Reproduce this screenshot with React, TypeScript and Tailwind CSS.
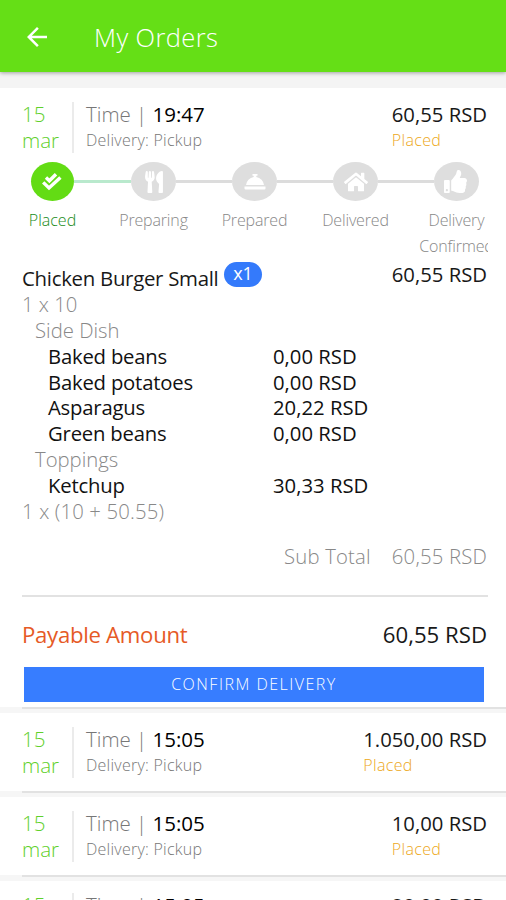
import type { ReactNode } from "react";
import { FaUtensils, FaHome, FaThumbsUp } from "react-icons/fa";
import { MdArrowBack } from "react-icons/md";

function DoubleCheck() {
  return (
    <svg className="mr-[2px]" width="22" height="22" viewBox="0 0 22 22" fill="none" stroke="currentColor" strokeWidth="3.4">
      <path d="M5 6.6 8.4 9.8 15 3.2" />
      <path d="M2.2 11.4 8 17 19.4 6.4" />
    </svg>
  );
}

function Cloche() {
  return (
    <svg width="24" height="20" viewBox="0 0 24 20" fill="currentColor">
      <path d="M9.5 2h5v1.8h-1.2V5A9 9 0 0 1 21 13H3a9 9 0 0 1 7.7-8V3.8H9.5z" />
      <path d="M1.5 14.6h21v2a1 1 0 0 1-1 1h-19a1 1 0 0 1-1-1z" />
    </svg>
  );
}

type Step = { label: ReactNode; icon: ReactNode; active?: boolean };

const steps: Step[] = [
  { label: "Placed", icon: <DoubleCheck />, active: true },
  { label: "Preparing", icon: <FaUtensils size={22} /> },
  { label: "Prepared", icon: <Cloche /> },
  { label: "Delivered", icon: <FaHome size={24} /> },
  { label: <>Delivery<br />Confirmed</>, icon: <FaThumbsUp size={23} className="mr-[3px]" /> },
];

const lines = [
  { name: "Side Dish", group: true },
  { name: "Baked beans", price: "0,00 RSD" },
  { name: "Baked potatoes", price: "0,00 RSD" },
  { name: "Asparagus", price: "20,22 RSD" },
  { name: "Green beans", price: "0,00 RSD" },
  { name: "Toppings", group: true },
  { name: "Ketchup", price: "30,33 RSD" },
];

function OrderHead({ time, price }: { time: string; price: string }) {
  return (
    <div className="flex h-[52px] pl-[22px] pr-[19px] leading-[26px]">
      <div className="w-[50px] text-[20.6px] font-light text-[#5fd02b]">
        15
        <br />
        mar
      </div>
      <div className="mt-px h-[51px] w-[2px] bg-[#ebebeb]" />
      <div className="ml-3 flex-1">
        <div className="text-[20.5px] font-light text-[#777]">
          Time | <span className="font-normal text-black">{time}</span>
        </div>
        <div className="text-[16px] font-light tracking-[0.25px] text-[#777]">Delivery: Pickup</div>
      </div>
      <div>
        <div className="text-[20.3px] text-[#181818]">{price}</div>
        <div className="text-[16px] font-light tracking-[0.35px] text-[#eda821]">Placed</div>
      </div>
    </div>
  );
}

function Separator() {
  return (
    <div className="h-[6px] bg-[#f6f6f6]">
      <div className="ml-[22px] h-[2px] bg-[#e2e2e2]" />
    </div>
  );
}

export default function App() {
  return (
    <div className="h-[900px] w-[506px] overflow-hidden bg-white font-['Open_Sans','Noto_Sans',sans-serif]">
      <header className="relative flex h-[72px] items-center bg-[#65df16] pl-[22px] pt-[2px] text-white shadow-[0_1px_4px_rgba(0,0,0,0.35)]">
        <MdArrowBack size={30} />
        <h1 className="ml-[42px] text-[25.5px] font-light tracking-[0.4px]">My Orders</h1>
      </header>
      <div className="h-4 bg-[#f4f4f4]" />

      <section className="pt-[13px]">
        <OrderHead time="19:47" price="60,55 RSD" />

        <div className="mr-[18px] mt-[9px] flex h-[94px] overflow-hidden pl-[2px]">
          {steps.map((step, i) => (
            <div key={i} className="flex w-[101px] shrink-0 flex-col items-center">
              <div className="flex h-[39px] w-full items-center">
                <div className={i === 0 ? "h-[3px] flex-1" : i === 1 ? "h-[3px] flex-1 bg-[#b9e9cd]" : "h-[3px] flex-1 bg-[#dcdcdc]"} />
                <div
                  className={
                    step.active
                      ? "flex h-[39px] w-[43px] items-center justify-center rounded-[50%] bg-[#63dc14] text-white"
                      : "flex h-[39px] w-[45px] items-center justify-center rounded-[50%] bg-[#dedede] text-white"
                  }
                >
                  {step.icon}
                </div>
                <div className={i === 4 ? "h-[3px] flex-1" : i === 0 ? "h-[3px] flex-1 bg-[#b9e9cd]" : "h-[3px] flex-1 bg-[#dcdcdc]"} />
              </div>
              <div
                className={
                  step.active
                    ? "mt-[6px] text-center text-[16px] font-light leading-[26px] text-[#188b18]"
                    : "mt-[6px] text-center text-[16px] font-light leading-[26px] tracking-[-0.15px] text-[#888]"
                }
              >
                {step.label}
              </div>
            </div>
          ))}
        </div>

        <div className="flex h-[36px] pl-[22px] pr-[19px] text-[20.3px] leading-[26px] text-[#181818]">
          <div className="w-[196px] whitespace-nowrap pt-[9px] text-[20.4px] tracking-[-0.28px]">Chicken Burger Small</div>
          <div className="ml-[6px] mt-[6px] h-[25px] w-[38px] rounded-full bg-[#347afb] text-center text-[18px] leading-[23px] text-white">x1</div>
          <div className="ml-auto pt-[5px]">60,55 RSD</div>
        </div>

        <div className="pl-[22px] text-[20.3px] leading-[25.85px]">
          <div className="font-light text-[#888]">1 x 10</div>
          {lines.map((line) =>
            line.group ? (
              <div key={line.name} className="pl-[13px] font-light text-[#888]">
                {line.name}
              </div>
            ) : (
              <div key={line.name} className="flex pl-[26px] text-[#111]">
                <div className="w-[225px] tracking-[-0.2px]">{line.name}</div>
                <div>{line.price}</div>
              </div>
            ),
          )}
          <div className="font-light tracking-[0.15px] text-[#888]">1 x (10 + 50.55)</div>
        </div>

        <div className="mt-[18px] flex justify-end pr-[19px] text-[20.3px] font-light leading-[26px] tracking-[0.2px] text-[#888]">
          <div className="mr-[21px]">Sub Total</div>
          <div>60,55 RSD</div>
        </div>
        <div className="ml-[22px] mr-[18px] mt-[26px] h-[2px] bg-[#e2e2e2]" />

        <div className="mt-[22px] flex justify-between pl-[22px] pr-[19px] text-[22.2px] leading-[32px]">
          <div className="tracking-[-0.3px] text-[#e65a26]">Payable Amount</div>
          <div className="text-[#181818]">60,55 RSD</div>
        </div>
        <button className="ml-6 mt-4 block h-[35px] w-[460px] bg-[#377dff] text-center text-[16px] font-light tracking-[1.5px] text-white">
          CONFIRM DELIVERY
        </button>
      </section>

      <div className="h-[5px]" />
      <Separator />
      <div className="h-[78px] pt-[13px]">
        <OrderHead time="15:05" price="1.050,00 RSD" />
      </div>
      <Separator />
      <div className="h-[78px] pt-[13px]">
        <OrderHead time="15:05" price="10,00 RSD" />
      </div>
      <Separator />
      <div className="h-[78px] pt-[11px]">
        <OrderHead time="15:05" price="20,00 RSD" />
      </div>
    </div>
  );
}
